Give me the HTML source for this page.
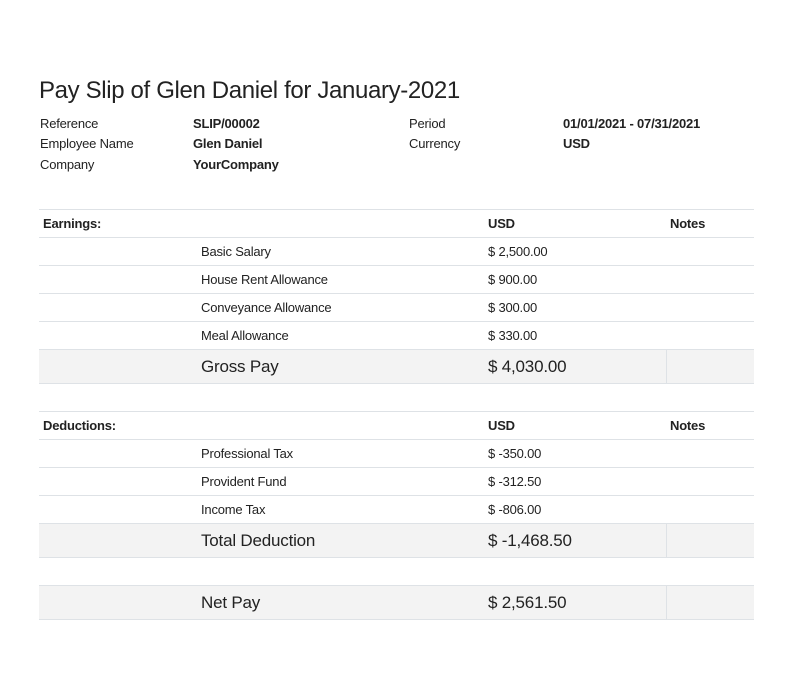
<!DOCTYPE html>
<html><head><meta charset="utf-8"><style>
body{margin:0;background:#fff;font-family:"Liberation Sans",sans-serif;color:#222;}
.t{position:absolute;white-space:nowrap;}
h1{position:absolute;left:39px;top:77px;margin:0;font-weight:normal;font-size:24px;letter-spacing:-0.35px;}
.i{font-size:13px;letter-spacing:-0.2px;}
.b{font-weight:bold;}
table{position:absolute;left:39px;width:715px;border-collapse:collapse;font-size:13px;letter-spacing:-0.2px;table-layout:fixed;}
td{height:27px;border-top:1px solid #dee2e6;padding:0 0 0 4px;vertical-align:middle;}
td.c1{width:154px;} td.c2{width:283px;} td.c3{width:178px;}
tr.s td{background:#f3f3f3;height:33px;font-size:17px;border-bottom:1px solid #dee2e6;}
tr.s td.c4{border-left:1px solid #dee2e6;}
</style></head><body>
<h1>Pay Slip of Glen Daniel for January-2021</h1>
<div class="t i" style="left:40px;top:116px">Reference</div>
<div class="t i" style="left:40px;top:136px">Employee Name</div>
<div class="t i" style="left:40px;top:157px">Company</div>
<div class="t i b" style="left:193px;top:116px">SLIP/00002</div>
<div class="t i b" style="left:193px;top:136px">Glen Daniel</div>
<div class="t i b" style="left:193px;top:157px">YourCompany</div>
<div class="t i" style="left:409px;top:116px">Period</div>
<div class="t i" style="left:409px;top:136px">Currency</div>
<div class="t i b" style="left:563px;top:116px">01/01/2021 - 07/31/2021</div>
<div class="t i b" style="left:563px;top:136px">USD</div>

<table style="top:209px">
<tr class="b"><td class="c1">Earnings:</td><td class="c2"></td><td class="c3">USD</td><td class="c4">Notes</td></tr>
<tr><td class="c1"></td><td class="c2">Basic Salary</td><td class="c3">$ 2,500.00</td><td></td></tr>
<tr><td class="c1"></td><td class="c2">House Rent Allowance</td><td class="c3">$ 900.00</td><td></td></tr>
<tr><td class="c1"></td><td class="c2">Conveyance Allowance</td><td class="c3">$ 300.00</td><td></td></tr>
<tr><td class="c1"></td><td class="c2">Meal Allowance</td><td class="c3">$ 330.00</td><td></td></tr>
<tr class="s"><td class="c1"></td><td class="c2">Gross Pay</td><td class="c3">$ 4,030.00</td><td class="c4"></td></tr>
</table>

<table style="top:411px">
<tr class="b"><td class="c1">Deductions:</td><td class="c2"></td><td class="c3">USD</td><td class="c4">Notes</td></tr>
<tr><td class="c1"></td><td class="c2">Professional Tax</td><td class="c3">$ -350.00</td><td></td></tr>
<tr><td class="c1"></td><td class="c2">Provident Fund</td><td class="c3">$ -312.50</td><td></td></tr>
<tr><td class="c1"></td><td class="c2">Income Tax</td><td class="c3">$ -806.00</td><td></td></tr>
<tr class="s"><td class="c1"></td><td class="c2">Total Deduction</td><td class="c3">$ -1,468.50</td><td class="c4"></td></tr>
</table>

<table style="top:585px">
<tr class="s"><td class="c1"></td><td class="c2">Net Pay</td><td class="c3">$ 2,561.50</td><td class="c4"></td></tr>
</table>
</body></html>
